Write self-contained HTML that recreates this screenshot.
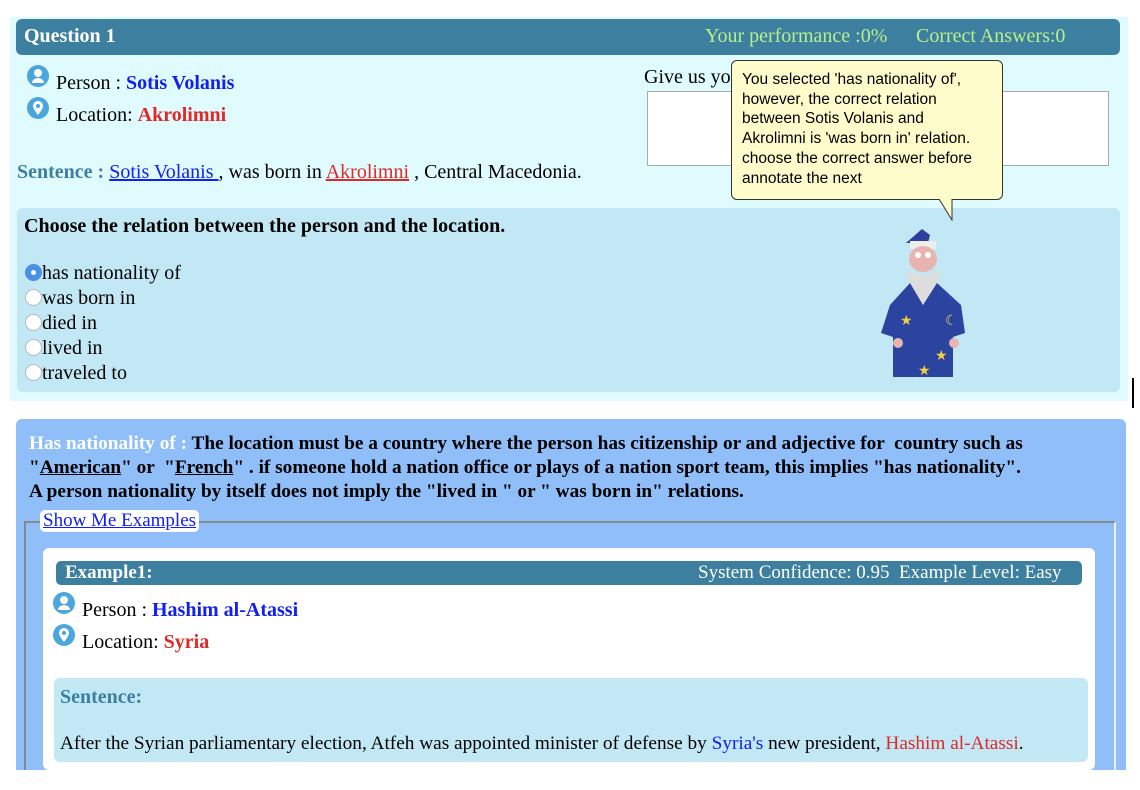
<!DOCTYPE html>
<html><head><meta charset="utf-8"><style>
*{box-sizing:border-box;margin:0;padding:0}
body{width:1140px;height:790px;background:#fff;position:relative;font-family:"Liberation Serif",serif;font-size:20px;color:#000;overflow:hidden}
.a{position:absolute;white-space:nowrap}
.b{font-weight:bold}
.blue{color:#1020f0}.red{color:#e02828}
.ic{position:absolute;width:22px;height:22px;border-radius:50%;background:#4aa6dc}
</style></head><body>
<div class="a" style="left:10px;top:17px;width:1118px;height:384px;background:#e0fbfd"></div>
<div class="a" style="left:16px;top:19px;width:1104px;height:36px;background:#3d7f9e;border-radius:6px"></div>
<div class="a b" style="left:24px;top:25px;color:#fff;font-size:20px">Question 1</div>
<div class="a" style="left:705px;top:25px;color:#b8f08c;font-size:20px">Your performance :0%</div>
<div class="a" style="left:916px;top:25px;color:#b8f08c;font-size:20px">Correct Answers:0</div>

<div class="ic" style="left:27px;top:65px"><svg width="22" height="22"><circle cx="11" cy="8" r="4" fill="#fff"/><path d="M5 18a6 5 0 0 1 12 0z" fill="#fff"/></svg></div>
<div class="a" style="left:56px;top:72px">Person : <span class="b blue">Sotis Volanis</span></div>
<div class="ic" style="left:27px;top:97px"><svg width="22" height="22"><path d="M11 4a5 5 0 0 1 5 5c0 3-5 9-5 9s-5-6-5-9a5 5 0 0 1 5-5z" fill="#fff"/><circle cx="11" cy="9" r="2" fill="#4aa6dc"/></svg></div>
<div class="a" style="left:56px;top:104px">Location: <span class="b red">Akrolimni</span></div>
<div class="a" style="left:17px;top:161px"><span class="b" style="color:#3d7f9e">Sentence : </span><span class="blue" style="text-decoration:underline">Sotis Volanis </span>, was born in <span class="red" style="text-decoration:underline">Akrolimni</span> , Central Macedonia.</div>

<div class="a" style="left:644px;top:66px">Give us yo</div>
<div class="a" style="left:647px;top:91px;width:462px;height:75px;background:#fff;border:1px solid #aaa"></div>

<div class="a" style="left:17px;top:208px;width:1103px;height:184px;background:#c2e8f5;border-radius:6px"></div>
<div class="a b" style="left:24px;top:215px">Choose the relation between the person and the location.</div>
<div class="a" style="left:25px;top:261px;line-height:25px">
<div><span style="display:inline-block;width:17px;height:17px;border-radius:50%;background:#4a90e8;vertical-align:-2px;position:relative"><span style="position:absolute;left:6px;top:6px;width:5px;height:5px;border-radius:50%;background:#fff"></span></span>has nationality of</div>
<div><span style="display:inline-block;width:17px;height:17px;border-radius:50%;background:#fff;border:1px solid #bbb;vertical-align:-2px"></span>was born in</div>
<div><span style="display:inline-block;width:17px;height:17px;border-radius:50%;background:#fff;border:1px solid #bbb;vertical-align:-2px"></span>died in</div>
<div><span style="display:inline-block;width:17px;height:17px;border-radius:50%;background:#fff;border:1px solid #bbb;vertical-align:-2px"></span>lived in</div>
<div><span style="display:inline-block;width:17px;height:17px;border-radius:50%;background:#fff;border:1px solid #bbb;vertical-align:-2px"></span>traveled to</div>
</div>

<svg class="a" style="left:870px;top:225px" width="110" height="160">
<path d="M52 4l8 6-2 8h-22z" fill="#2c3e9e"/>
<rect x="40" y="16" width="26" height="8" fill="#eee"/>
<ellipse cx="53" cy="34" rx="14" ry="13" fill="#e8b4b0"/>
<circle cx="48" cy="30" r="3" fill="#fff"/><circle cx="58" cy="30" r="3" fill="#fff"/>
<path d="M36 44q17 12 34 0l-8 34h-18z" fill="#ddd"/>
<path d="M20 80l20-22 13 22 14-22 24 22 4 28-12 4v40h-60v-40l-12-4z" fill="#2b44a0"/>
<path d="M42 58l11 22 12-22-6 0-6 14-6-14z" fill="#ddd"/>
<circle cx="28" cy="118" r="5" fill="#e8b4b0"/><circle cx="84" cy="118" r="5" fill="#e8b4b0"/>
<text x="30" y="100" fill="#f0d040" font-size="14">★</text><text x="65" y="135" fill="#f0d040" font-size="14">★</text><text x="48" y="150" fill="#f0d040" font-size="14">★</text><text x="75" y="100" fill="#f0d040" font-size="14">☾</text>
</svg>

<div class="a" style="left:731px;top:60px;width:272px;height:140px;background:#fffccc;border:1px solid #333;border-radius:6px;padding:9px 18px 9px 10px;font-family:'Liberation Sans',sans-serif;font-size:15.5px;line-height:19.7px;white-space:normal">You selected 'has nationality of', however, the correct relation between Sotis Volanis and Akrolimni is 'was born in' relation. choose the correct answer before annotate the next</div>
<svg class="a" style="left:938px;top:199px" width="16" height="22"><path d="M1 0l13 21v-21" fill="#fffccc" stroke="#333"/><path d="M2 0h11" stroke="#fffccc" stroke-width="2"/></svg>

<div class="a" style="left:1132px;top:378px;width:2px;height:30px;background:#000"></div>

<div class="a" style="left:16px;top:419px;width:1110px;height:351px;background:#8fbef8;border-radius:6px 6px 0 0"></div>
<div class="a b" style="left:29px;top:432px;line-height:24px;font-size:19.3px"><span style="color:#fff">Has nationality of : </span>The location must be a country where the person has citizenship or and adjective for &nbsp;country such as<br>"<u>American</u>" or &nbsp;"<u>French</u>" . if someone hold a nation office or plays of a nation sport team, this implies "has nationality".<br>A person nationality by itself does not imply the "lived in " or " was born in" relations.</div>
<div class="a" style="left:24px;top:521px;width:1092px;height:260px;border:2px solid #888;border-color:#888 #eee #eee #888"></div>
<div class="a" style="left:40px;top:510px;background:#fff;border-radius:5px;padding:0 3px;color:#1020f0;text-decoration:underline;font-size:19px">Show Me Examples</div>
<div class="a" style="left:43px;top:548px;width:1052px;height:222px;background:#fff;border-radius:6px"></div>
<div class="a" style="left:56px;top:561px;width:1026px;height:24px;background:#3d7f9e;border-radius:5px"></div>
<div class="a b" style="left:65px;top:562px;color:#fff;font-size:19px">Example1:</div>
<div class="a" style="left:698px;top:562px;color:#fff;font-size:19px">System Confidence: 0.95 &nbsp;Example Level: Easy</div>
<div class="ic" style="left:53px;top:592px"><svg width="22" height="22"><circle cx="11" cy="8" r="4" fill="#fff"/><path d="M5 18a6 5 0 0 1 12 0z" fill="#fff"/></svg></div>
<div class="a" style="left:82px;top:599px">Person : <span class="b blue">Hashim al-Atassi</span></div>
<div class="ic" style="left:53px;top:624px"><svg width="22" height="22"><path d="M11 4a5 5 0 0 1 5 5c0 3-5 9-5 9s-5-6-5-9a5 5 0 0 1 5-5z" fill="#fff"/><circle cx="11" cy="9" r="2" fill="#4aa6dc"/></svg></div>
<div class="a" style="left:82px;top:631px">Location: <span class="b red">Syria</span></div>
<div class="a" style="left:54px;top:678px;width:1034px;height:84px;background:#c2e8f5;border-radius:6px"></div>
<div class="a b" style="left:60px;top:686px;color:#3d7f9e">Sentence:</div>
<div class="a" style="left:60px;top:733px;font-size:19.3px">After the Syrian parliamentary election, Atfeh was appointed minister of defense by <span class="blue">Syria's</span> new president, <span class="red">Hashim al-Atassi</span>.</div>
<div class="a" style="left:0;top:770px;width:1140px;height:20px;background:#fff"></div>
</body></html>
